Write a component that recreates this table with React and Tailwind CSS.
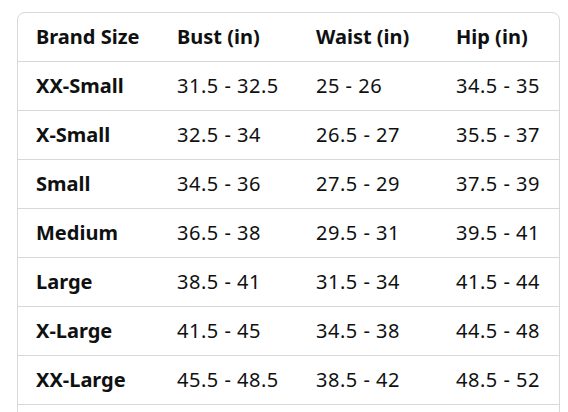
const rows = [
  ["XX-Small", "31.5 - 32.5", "25 - 26", "34.5 - 35"],
  ["X-Small", "32.5 - 34", "26.5 - 27", "35.5 - 37"],
  ["Small", "34.5 - 36", "27.5 - 29", "37.5 - 39"],
  ["Medium", "36.5 - 38", "29.5 - 31", "39.5 - 41"],
  ["Large", "38.5 - 41", "31.5 - 34", "41.5 - 44"],
  ["X-Large", "41.5 - 45", "34.5 - 38", "44.5 - 48"],
  ["XX-Large", "45.5 - 48.5", "38.5 - 42", "48.5 - 52"],
];

const cols = ["w-[141px]", "w-[139px]", "w-[140px]", "flex-1"];

const App = () => {
  return (
    <div className="bg-white w-[568px] h-[412px] overflow-hidden pl-[17px] pt-[12px] font-['Noto_Sans',sans-serif] text-[#0f1111]">
      <div className="w-[543px] border border-[#d5d9d9] rounded-lg">
        <div className="flex h-[49px] items-center pl-[18px] text-[20px] font-bold border-b border-[#d5d9d9]">
          <div className={cols[0]}>Brand Size</div>
          <div className={cols[1]}>Bust (in)</div>
          <div className={cols[2]}>Waist (in)</div>
          <div className={cols[3]}>Hip (in)</div>
        </div>
        {rows.map((r) => (
          <div
            key={r[0]}
            className="flex h-[49px] items-center pl-[18px] text-[20px] tracking-[0.5px] border-b border-[#d5d9d9]"
          >
            <div className={`${cols[0]} font-bold tracking-normal`}>{r[0]}</div>
            <div className={cols[1]}>{r[1]}</div>
            <div className={cols[2]}>{r[2]}</div>
            <div className={cols[3]}>{r[3]}</div>
          </div>
        ))}
        <div className="h-[49px]"></div>
      </div>
    </div>
  );
};

export default App;
